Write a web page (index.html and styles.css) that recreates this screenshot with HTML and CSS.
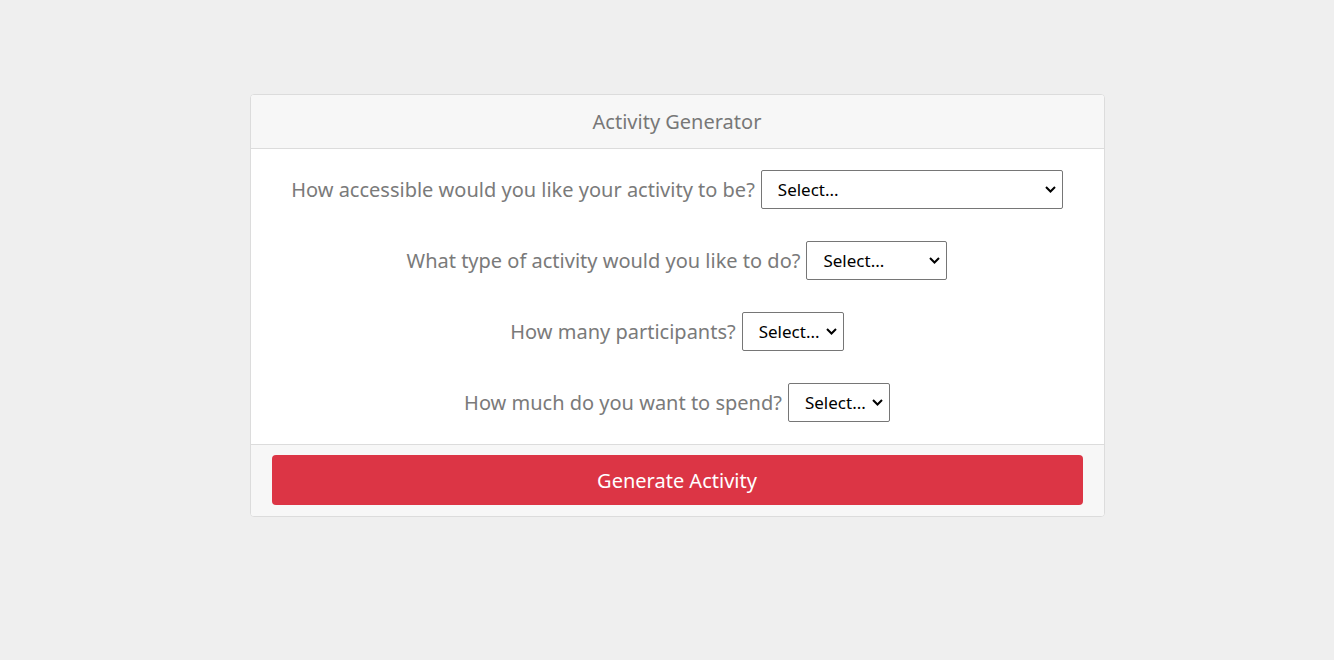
FILE: index.html
```html
<!DOCTYPE html>
<html lang="en">
<head>
<meta charset="utf-8">
<title>Activity Generator</title>
<link rel="stylesheet" href="styles.css">
</head>
<body>
<main class="page">
  <section class="card">
    <header class="card-header">Activity Generator</header>
    <div class="card-body">
      <div class="field">
        <label for="acc">How accessible would you like your activity to be?</label>
        <span class="sel-wrap sel-acc">
          <select id="acc" class="sel"><option>Select...</option></select>
          <svg class="chev" width="11" height="7" viewBox="0 0 11 7"><path d="M1 1 L5.5 5.5 L10 1" fill="none" stroke="#000" stroke-width="2"/></svg>
        </span>
      </div>
      <div class="field">
        <label for="type">What type of activity would you like to do?</label>
        <span class="sel-wrap sel-type">
          <select id="type" class="sel"><option>Select...</option></select>
          <svg class="chev" width="11" height="7" viewBox="0 0 11 7"><path d="M1 1 L5.5 5.5 L10 1" fill="none" stroke="#000" stroke-width="2"/></svg>
        </span>
      </div>
      <div class="field">
        <label for="part">How many participants?</label>
        <span class="sel-wrap sel-small">
          <select id="part" class="sel"><option>Select...</option></select>
          <svg class="chev" width="11" height="7" viewBox="0 0 11 7"><path d="M1 1 L5.5 5.5 L10 1" fill="none" stroke="#000" stroke-width="2"/></svg>
        </span>
      </div>
      <div class="field">
        <label for="price">How much do you want to spend?</label>
        <span class="sel-wrap sel-small">
          <select id="price" class="sel"><option>Select...</option></select>
          <svg class="chev" width="11" height="7" viewBox="0 0 11 7"><path d="M1 1 L5.5 5.5 L10 1" fill="none" stroke="#000" stroke-width="2"/></svg>
        </span>
      </div>
    </div>
    <footer class="card-footer">
      <button class="btn" type="button">Generate Activity</button>
    </footer>
  </section>
</main>
</body>
</html>
```

FILE: styles.css
```css
* { box-sizing: border-box; }
html, body { margin: 0; padding: 0; }
body {
  background: #efefef;
  font-family: "Noto Sans", "Open Sans", sans-serif;
  color: #7a7a7a;
  height: 660px;
}
.page {
  padding: 94px 0 0 20px;
  display: flex;
  justify-content: center;
}
.card {
  width: 855px;
  background: #fff;
  border: 1px solid #dcdcdc;
  border-radius: 4px;
  overflow: hidden;
}
.card-header {
  background: #f7f7f7;
  border-bottom: 1px solid #dcdcdc;
  height: 54px;
  display: flex;
  align-items: center;
  justify-content: center;
  font-size: 20px;
  color: #777;
}
.card-body {
  padding: 21px 20px 22px;
  display: flex;
  flex-direction: column;
  gap: 32px;
}
.field {
  display: flex;
  justify-content: center;
  align-items: center;
  gap: 6px;
  height: 39px;
}
.field label {
  font-size: 20px;
  color: #7a7a7a;
}
.sel-wrap {
  position: relative;
  display: block;
  height: 39px;
}
.sel-acc { width: 302px; }
.sel-type { width: 141px; }
.sel-small { width: 102px; }
.sel {
  -webkit-appearance: none;
  appearance: none;
  width: 100%;
  height: 39px;
  font-family: inherit;
  font-size: 17px;
  color: #000;
  background: #fff;
  border: 1px solid #767676;
  border-radius: 2px;
  padding: 0 22px 0 16px;
}
.chev {
  position: absolute;
  right: 7px;
  top: 16px;
  pointer-events: none;
}
.card-footer {
  background: #f7f7f7;
  border-top: 1px solid #dcdcdc;
  padding: 10px 21px 11px;
}
.btn {
  display: block;
  width: 100%;
  height: 50px;
  background: #dc3545;
  color: #fff;
  border: 0;
  border-radius: 4px;
  font-family: inherit;
  font-size: 20px;
}
```
